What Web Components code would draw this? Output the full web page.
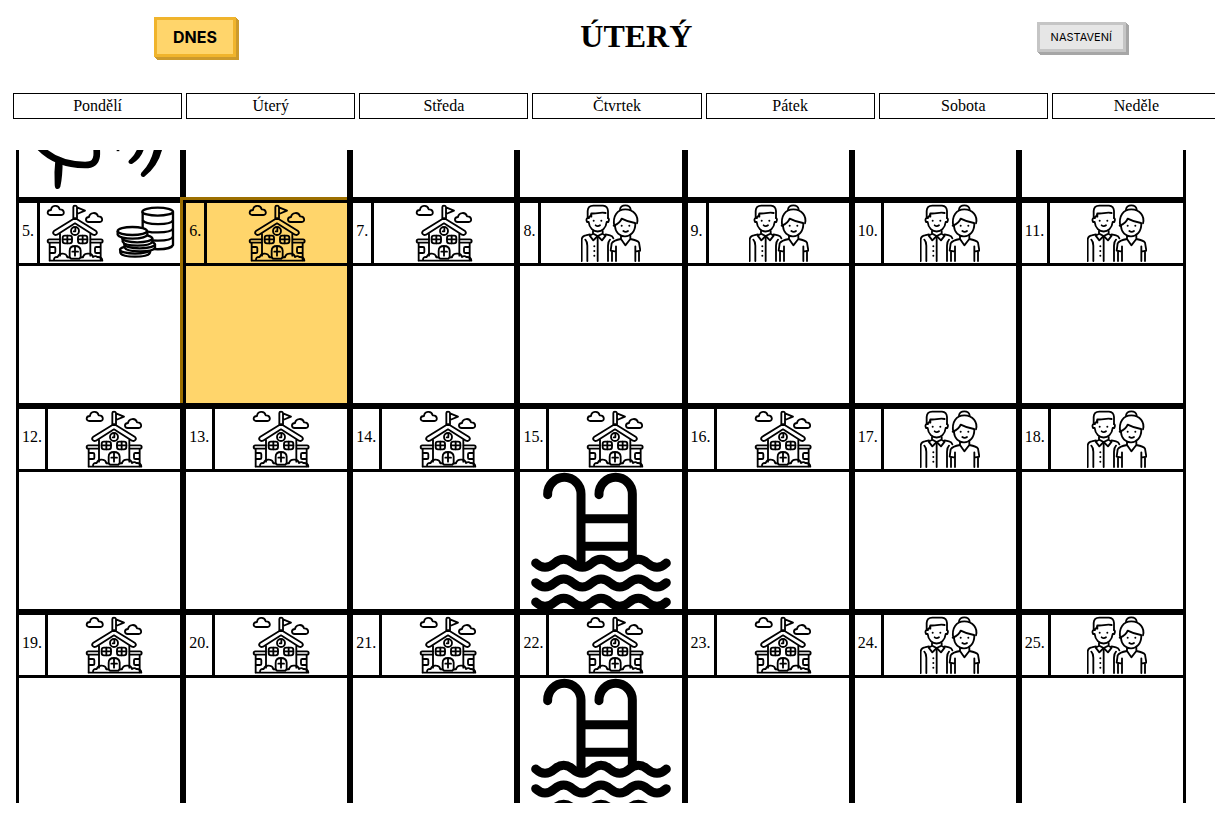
<!DOCTYPE html>
<html lang="cs">
<head>
<meta charset="utf-8">
<title>Kalendář</title>
<style>
  html, body { margin: 0; height: 100%; overflow: hidden; background: #fff; }
  body { font: 16px/18px "Liberation Serif", "Times New Roman", serif; color: #000; }
</style>
</head>
<body>
<calendar-app></calendar-app>
<script>
const ICONS = {
  school: { box: '0 0 180 180', w: 60, h: 60, art: `
    <g fill="none" stroke="#000" stroke-width="5.5" stroke-linecap="round" stroke-linejoin="round">
      <path d="M16 36C5 36 5 21 18 21C19 7 40 3 44 19C58 18 61 35 49 36Z"/>
      <path d="M131 57C120 57 120 43 132 42C134 28 155 25 159 40C173 39 176 56 164 57Z"/>
      <path d="M85 46V12Q85 8 90 8T96 12V46M96 13L120 23L96 33"/>
      <path d="M90 45L28 83Q22 88 26 93T36 95L90 61L144 95Q150 98 154 93T152 83Z"/>
      <circle cx="90" cy="84" r="12"/><path d="M91 77V85H86"/>
      <path d="M45 93V158M136 93V158"/>
      <rect x="53" y="98" width="28" height="23" rx="7"/><path d="M67 98V121M53 109H81"/>
      <rect x="99" y="98" width="28" height="23" rx="7"/><path d="M113 98V121M99 109H127"/>
      <path d="M74 163V143Q74 129 90 129T107 143V163M90 131V158M82 146H99"/>
      <path d="M44 109H13Q8 109 8 114T13 119H44M137 109H168Q173 109 173 114T168 119H137"/>
      <path d="M14 120V172M167 120V172M16 132H27Q31 132 31 136V146Q31 150 27 150H16M165 132H154Q150 132 150 136V146Q150 150 154 150H165"/>
      <path d="M14 173H172M27 172Q26 161 38 162Q42 150 55 152Q65 153 67 163Q76 162 78 167H103Q105 162 114 163Q117 151 130 152Q141 151 144 162Q151 157 157 162Q171 161 172 173"/>
    </g>` },
  family: { box: '0 0 180 180', w: 60, h: 60, art: `
    <g fill="none" stroke="#000" stroke-width="5.5" stroke-linecap="round" stroke-linejoin="round">
      <path d="M20 45V24Q21 8 37 8H66Q80 9 81 24V45M31 41V31C46 34 57 26 74 30M24 45V43Q31 39 31 31"/>
      <path d="M20 45Q14 47 18 57H23C27 95 73 95 77 57H82Q86 47 81 45"/>
      <path d="M44 67Q50 72 57 67"/>
      <path d="M36 84V92L26 98L37 112L50 99L63 112L74 98L65 92V84M36 92L50 99L65 92"/>
      <path d="M2 174V110Q3 99 14 97L27 94M74 94L87 97Q95 99 97 106M13 110Q19 116 19 128V174M87 110Q81 116 81 128V174M50 101V174"/>
      <path d="M117 19Q119 7 133 7T149 19"/>
      <path d="M100 69C94 39 109 19 133 19C158 19 174 39 168 61M98 68Q117 61 122 47Q141 57 162 60"/>
      <path d="M102 66C102 112 163 112 163 62"/>
      <path d="M127 84Q134 89 141 84"/>
      <path d="M120 98V108L133 127L148 108V98M120 108Q97 112 92 121L89 143L105 146V130M148 108Q170 112 174 119L178 143L163 146V130M93 147V174M105 146V174M163 146V174M174 147V174"/>
    </g>
    <g><circle cx="38" cy="53" r="3"/><circle cx="61" cy="53" r="3"/><circle cx="122" cy="68" r="3"/><circle cx="145" cy="68" r="3"/>
    <circle cx="40" cy="130" r="3"/><circle cx="40" cy="144" r="3"/><circle cx="40" cy="158" r="3"/></g>` },
  coins: { box: '0 0 180 180', w: 60, h: 60, art: `
    <g fill="#fff" stroke="#000" stroke-width="7" stroke-linejoin="round">
      <path d="M83 26V126C88 143 168 143 174 126V26"/>
      <path fill="none" d="M83 52C90 67 168 67 174 52M83 77C90 92 168 92 174 77M83 101C90 117 168 117 174 101"/>
      <ellipse cx="128" cy="26" rx="46" ry="12"/>
      <path d="M16 140V149C21 165 99 165 105 149V140"/><ellipse cx="60" cy="140" rx="45" ry="12"/>
      <path d="M29 124V134C35 149 115 149 120 134V124"/><ellipse cx="74" cy="124" rx="46" ry="12"/>
      <path d="M23 106V116C29 132 106 132 112 116V106"/><ellipse cx="67" cy="106" rx="45" ry="12"/>
      <path d="M8 84V95C13 111 92 111 97 95V84"/><ellipse cx="52" cy="84" rx="44" ry="12"/>
    </g>` },
  pool: { box: '0 0 420 420', w: 140, h: 140, art: `
    <g fill="none" stroke="#000" stroke-width="27" stroke-linecap="round">
      <path d="M50 68V66A50 50 0 0 1 150 66V270M204 68V66A50 50 0 0 1 304 66V262M150 140H304M150 223H304"/>
      <path id="w" d="M14 273Q28 286 42 286C70 286 70 262 98 262S126 286 154 286S182 262 210 262S238 286 266 286S294 262 322 262S350 286 378 286Q392 286 406 273"/>
      <use href="#w" y="59"/><use href="#w" y="117"/>
    </g>` },
  legs: { box: '0 270 420 141', w: 140, h: 47, art: `
    <path fill="none" stroke="#000" stroke-width="20" d="M22 254C54 292 100 314 165 315C192 315 198 303 200 288Q201 275 199 256"/>
    <path d="M76 300H98Q98 350 91 380Q88 389 80 387Q74 386 74 372Q72 335 76 300Z"/>
    <path d="M322 266H342Q334 295 307 311Q298 314 295 306Q296 300 302 296Q315 284 322 266Z"/>
    <path d="M373 262H398Q386 318 343 350Q335 353 332 344Q333 338 338 334Q365 305 373 262Z"/>
    <path fill="none" stroke="#000" stroke-width="5" d="M260 271H268"/>` }
};

class PictoIcon extends HTMLElement {
  connectedCallback() {
    const i = ICONS[this.getAttribute('name')];
    this.attachShadow({ mode: 'open' }).innerHTML = `
      <style>:host { display: block; flex: none; } svg { display: block; }</style>
      <svg width="${i.w}" height="${i.h}" viewBox="${i.box}" aria-hidden="true">${i.art}</svg>`;
  }
}
customElements.define('picto-icon', PictoIcon);

class PushButton extends HTMLElement {
  connectedCallback() {
    this.attachShadow({ mode: 'open' }).innerHTML = `
      <style>
        :host { display: block; --face: #ffd56b; --edge: #f0b42c; --shade: #cc9a2c; }
        :host([kind="quiet"]) { --face: #e6e6e6; --edge: #c5c5c5; --shade: #a6a6a6; }
        button {
          display: block; box-sizing: border-box; height: 40px; padding: 0 16px;
          border: 3px solid var(--edge); background: var(--face); color: #000;
          box-shadow: 1px 1px var(--shade), 2px 2px var(--shade), 3px 3px var(--shade);
          font: 700 16px/20px Inter, sans-serif; cursor: pointer;
        }
        :host([kind="quiet"]) button { height: 30px; padding: 0 11px; font: 400 11px/14px Inter, sans-serif; }
      </style>
      <button type="button"><slot></slot></button>`;
  }
}
customElements.define('push-button', PushButton);

class WeekDays extends HTMLElement {
  connectedCallback() {
    const names = ['Pondělí', 'Úterý', 'Středa', 'Čtvrtek', 'Pátek', 'Sobota', 'Neděle'];
    this.attachShadow({ mode: 'open' }).innerHTML = `
      <style>
        :host { display: grid; grid-template-columns: repeat(7, 1fr); gap: 4px; margin: 0 -6px 0 13px; }
        div { border: 1px solid #000; padding: 3px 0; text-align: center; }
      </style>${names.map(n => `<div>${n}</div>`).join('')}`;
  }
}
customElements.define('week-days', WeekDays);

class DayCell extends HTMLElement {
  connectedCallback() {
    const day = this.getAttribute('day');
    const list = a => (this.getAttribute(a) || '').split(' ').filter(Boolean)
      .map(n => `<picto-icon name="${n}"></picto-icon>`).join('');
    this.attachShadow({ mode: 'open' }).innerHTML = `
      <style>
        :host { display: block; min-width: 0; border: 3px solid #000; background: #fff; }
        :host([tail]) { border-top: 0; }
        :host([today]) { background: #ffd56b; box-shadow: -3px -3px #9c6f00; }
        .head { display: flex; height: 60px; border-bottom: 3px solid #000; }
        .num { display: flex; align-items: center; padding: 0 3px 4px; border-right: 3px solid #000; }
        .small { display: flex; flex: 1; justify-content: space-around; }
        .body { display: flex; justify-content: center; height: 137px; overflow: hidden; }
        :host([tail]) .body { height: 47px; }
      </style>
      ${day ? `<div class="head"><div class="num">${day}.</div><div class="small">${list('head')}</div></div>` : ''}
      <div class="body">${list('main')}</div>`;
  }
}
customElements.define('day-cell', DayCell);

class MonthGrid extends HTMLElement {
  connectedCallback() {
    let cells = '<day-cell tail main="legs"></day-cell>' + '<day-cell tail></day-cell>'.repeat(6);
    for (let d = 5; d <= 25; d++) {
      const weekend = d % 7 === 3 || d % 7 === 4 || d === 8 || d === 9;
      const head = weekend ? 'family' : d === 5 ? 'school coins' : 'school';
      const main = d === 15 || d === 22 ? 'pool' : '';
      cells += `<day-cell day="${d}" head="${head}" main="${main}"${d === 6 ? ' today' : ''}></day-cell>`;
    }
    this.attachShadow({ mode: 'open' }).innerHTML = `
      <style>
        :host { display: block; overflow: auto; scrollbar-width: none; }
        .grid { display: grid; grid-template-columns: repeat(7, 1fr); margin: 0 29px 0 16px; }
      </style><div class="grid">${cells}</div>`;
  }
}
customElements.define('month-grid', MonthGrid);

class CalendarApp extends HTMLElement {
  connectedCallback() {
    this.attachShadow({ mode: 'open' }).innerHTML = `
      <style>
        :host { display: flex; flex-direction: column; height: 100vh; overflow: hidden; }
        header { display: flex; flex: none; align-items: center; justify-content: space-between; height: 74px; padding: 0 89px 0 154px; margin-bottom: 19px; }
        h1 { margin: 0; padding-bottom: 2px; font-size: 32px; line-height: 36px; }
        week-days { flex: none; margin-bottom: 31px; }
        month-grid { flex: 1; min-height: 0; margin-bottom: 15px; }
      </style>
      <header>
        <push-button>DNES</push-button>
        <h1>ÚTERÝ</h1>
        <push-button kind="quiet">NASTAVENÍ</push-button>
      </header>
      <week-days></week-days>
      <month-grid></month-grid>`;
  }
}
customElements.define('calendar-app', CalendarApp);
</script>
</body>
</html>
